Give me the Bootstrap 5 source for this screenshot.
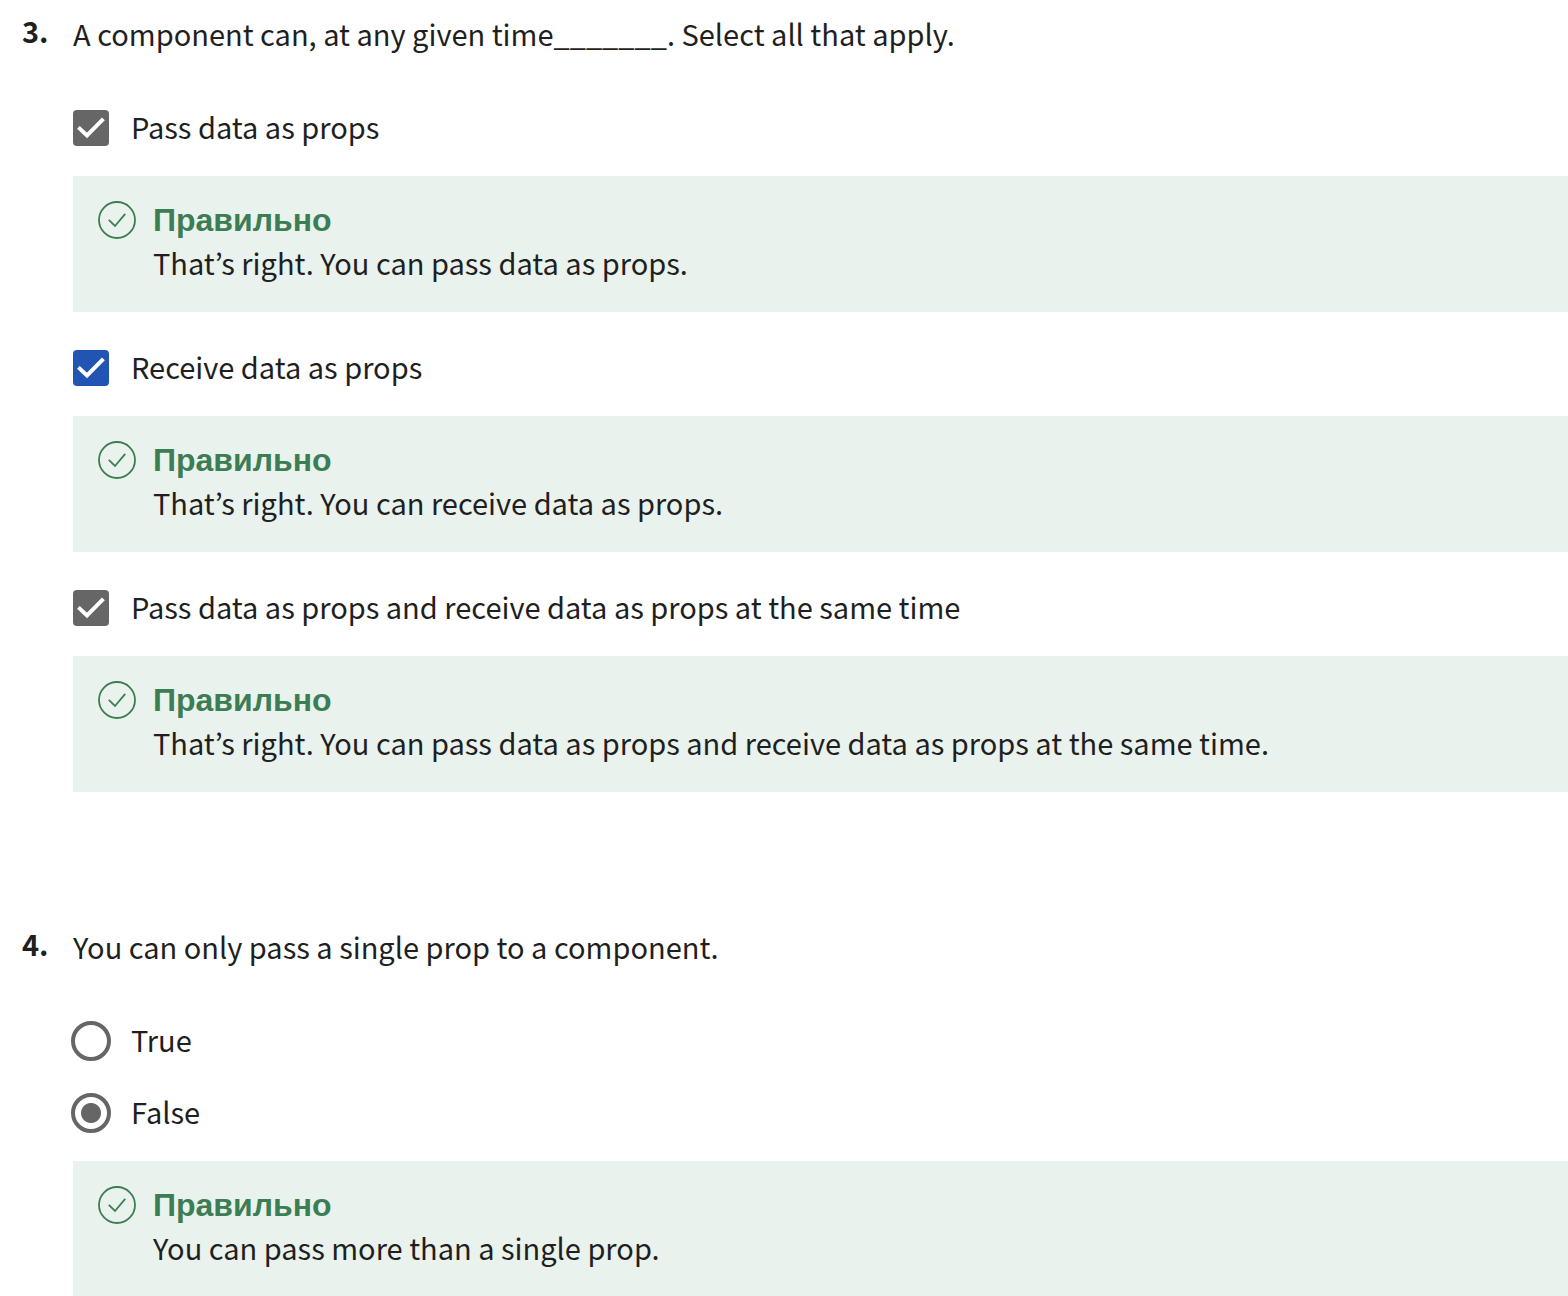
<!DOCTYPE html>
<html lang="en">
<head>
<meta charset="utf-8">
<meta name="viewport" content="width=device-width, initial-scale=1">
<title>Quiz</title>
<link href="https://cdn.jsdelivr.net/npm/bootstrap@5.3.0/dist/css/bootstrap.min.css" rel="stylesheet">
<style>
body { font-family: "Noto Sans CJK KR", "Noto Sans", sans-serif; font-size: 29px; line-height: 40px; color: #1f1f1f; background: #fff; }
.quiz { padding-top: 10px; }
.question { padding-left: 22px; }
.question + .question { margin-top: 131px; }
.q-number { width: 51px; font-weight: 700; }
.q-text { font-size: inherit; line-height: 46px; font-weight: 400; margin-bottom: 36px; }
.option { height: 72px; gap: 22px; }
.option label { padding-bottom: 4px; }
.option .form-check-input { width: 36px; height: 36px; margin: 0; border: 0; opacity: 1; background-color: #666; flex: none; }
.option .form-check-input[type=checkbox] { border-radius: 4px; background-size: 100%;
  background-image: url("data:image/svg+xml,%3Csvg xmlns='http://www.w3.org/2000/svg' viewBox='0 0 36 36'%3E%3Cpath fill='none' stroke='%23fff' stroke-width='4' d='M5.4 17.4 14 25.4 30.4 8.9'/%3E%3C/svg%3E"); }
.option .form-check-input.chosen { background-color: #2254b4; }
.option .form-check-input[type=radio] { width: 40px; height: 40px; margin: 0 -2px; border: 4px solid #666; background: #fff; }
.option .form-check-input[type=radio]:checked { background: radial-gradient(circle, #666 0 9.5px, #fff 10.5px); }
.feedback { background: #e9f2ed; margin-top: 12px; margin-bottom: 20px; padding: 22px 25px 30px; gap: 17px; }
.feedback:last-child { margin-bottom: 0; }
.feedback svg { width: 38px; height: 38px; margin-top: 3px; flex: none; }
.verdict { font-family: "Liberation Sans", Arial, sans-serif; font-size: 32px; line-height: 44px; font-weight: 700; color: #3d7d54; margin: 0; }
</style>
<script src="https://cdn.jsdelivr.net/npm/bootstrap@5.3.0/dist/js/bootstrap.bundle.min.js"></script>
</head>
<body>
<svg class="d-none" aria-hidden="true">
  <symbol id="ok" viewBox="0 0 38 38"><g fill="none" stroke="#3d7d54" stroke-width="1.8"><circle cx="19" cy="19" r="18"/><path d="M10.8 18.8 17 25 27.2 12.8"/></g></symbol>
</svg>
<main class="quiz">
  <section class="question d-flex align-items-start">
    <div class="q-number flex-shrink-0">3.</div>
    <div class="flex-grow-1">
      <h2 class="q-text">A component can, at any given time_______. Select all that apply.</h2>
      <div class="option d-flex align-items-center">
        <input class="form-check-input" type="checkbox" id="a1" checked><label for="a1">Pass data as props</label>
      </div>
      <div class="feedback d-flex align-items-start">
        <svg aria-hidden="true"><use href="#ok"/></svg>
        <div><h3 class="verdict">Правильно</h3><p class="mb-0">That’s right. You can pass data as props.</p></div>
      </div>
      <div class="option d-flex align-items-center">
        <input class="form-check-input chosen" type="checkbox" id="a2" checked><label for="a2">Receive data as props</label>
      </div>
      <div class="feedback d-flex align-items-start">
        <svg aria-hidden="true"><use href="#ok"/></svg>
        <div><h3 class="verdict">Правильно</h3><p class="mb-0">That’s right. You can receive data as props.</p></div>
      </div>
      <div class="option d-flex align-items-center">
        <input class="form-check-input" type="checkbox" id="a3" checked><label for="a3">Pass data as props and receive data as props at the same time</label>
      </div>
      <div class="feedback d-flex align-items-start">
        <svg aria-hidden="true"><use href="#ok"/></svg>
        <div><h3 class="verdict">Правильно</h3><p class="mb-0">That’s right. You can pass data as props and receive data as props at the same time.</p></div>
      </div>
    </div>
  </section>
  <section class="question d-flex align-items-start">
    <div class="q-number flex-shrink-0">4.</div>
    <div class="flex-grow-1">
      <h2 class="q-text">You can only pass a single prop to a component.</h2>
      <div class="option d-flex align-items-center">
        <input class="form-check-input" type="radio" name="b" id="b1"><label for="b1">True</label>
      </div>
      <div class="option d-flex align-items-center">
        <input class="form-check-input" type="radio" name="b" id="b2" checked><label for="b2">False</label>
      </div>
      <div class="feedback d-flex align-items-start">
        <svg aria-hidden="true"><use href="#ok"/></svg>
        <div><h3 class="verdict">Правильно</h3><p class="mb-0">You can pass more than a single prop.</p></div>
      </div>
    </div>
  </section>
</main>
</body>
</html>
